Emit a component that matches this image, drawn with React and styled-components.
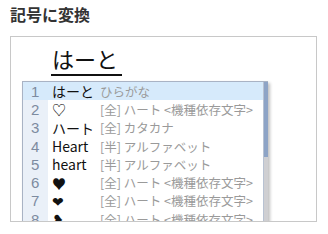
import React from "react";
import styled, { createGlobalStyle } from "styled-components";

const GlobalStyle = createGlobalStyle`
  body {
    margin: 0;
    background: #fff;
    font-family: "Noto Sans CJK JP", "Noto Sans", sans-serif;
  }
`;

const candidates = [
  { word: "はーと", note: "ひらがな" },
  { word: "♡", note: "[全] ハート <機種依存文字>" },
  { word: "ハート", note: "[全] カタカナ" },
  { word: "Heart", note: "[半] アルファベット" },
  { word: "heart", note: "[半] アルファベット" },
  { word: "♥", note: "[全] ハート <機種依存文字>" },
  { word: "❤", note: "[全] ハート <機種依存文字>" },
  { word: "❥", note: "[全] ハート <機種依存文字>" },
];

export default function App() {
  return (
    <Page>
      <GlobalStyle />
      <Title>記号に変換</Title>
      <Box>
        <Composition>はーと</Composition>
        <CandidateWindow>
          <List>
            {candidates.map((c, i) => (
              <Row key={i} selected={i === 0}>
                <Num selected={i === 0}>{i + 1}</Num>
                <Word>{c.word}</Word>
                <Note>{c.note}</Note>
              </Row>
            ))}
          </List>
          <Scrollbar>
            <Thumb />
          </Scrollbar>
        </CandidateWindow>
      </Box>
    </Page>
  );
}

const Page = styled.div`
  width: 328px;
  height: 234px;
  padding-top: 3px;
  box-sizing: border-box;
`;

const Title = styled.h1`
  margin: 0 0 0 10px;
  font-size: 16px;
  line-height: 23px;
  font-weight: bold;
  color: #333;
`;

const Box = styled.div`
  margin: 10px 0 0 10px;
  width: 307px;
  height: 186px;
  box-sizing: border-box;
  border: 1px solid #c8c8c8;
  overflow: hidden;
`;

const Composition = styled.div`
  margin: 5px 0 0 40px;
  width: 70px;
  font-size: 22px;
  line-height: 32px;
  color: #111;
  border-bottom: 2px solid #111;
  padding-left: 1px;
`;

const CandidateWindow = styled.div`
  margin: 5px 0 0 11px;
  width: 245px;
  display: flex;
  border: 1px solid #a9b3c4;
  border-right: none;
  box-shadow: 2px 2px 3px rgba(0, 0, 0, 0.25);
  background: #fff;
`;

const List = styled.div`
  flex: 1;
  display: flex;
  flex-direction: column;
`;

const Row = styled.div`
  display: flex;
  align-items: center;
  height: 18.3px;
  background: ${(p) => (p.selected ? "#d6eafb" : "#fff")};
`;

const Num = styled.span`
  width: 25px;
  flex: none;
  align-self: stretch;
  display: flex;
  align-items: center;
  padding-left: 8px;
  box-sizing: border-box;
  font-family: "Liberation Sans", sans-serif;
  font-size: 15px;
  color: #7d8ba0;
  background: ${(p) => (p.selected ? "#d6eafb" : "#eaf0f8")};
`;

const Word = styled.span`
  width: 48px;
  flex: none;
  padding-left: 4px;
  font-size: 14px;
  color: #111;
  white-space: nowrap;
`;

const Note = styled.span`
  font-size: 12.5px;
  color: #9a9a9a;
  white-space: nowrap;
`;

const Scrollbar = styled.div`
  width: 4px;
  flex: none;
  background: #cfcfd2;
  border-left: 1px solid #b8c2d2;
`;

const Thumb = styled.div`
  height: 75px;
  background: #8ea4c6;
`;
